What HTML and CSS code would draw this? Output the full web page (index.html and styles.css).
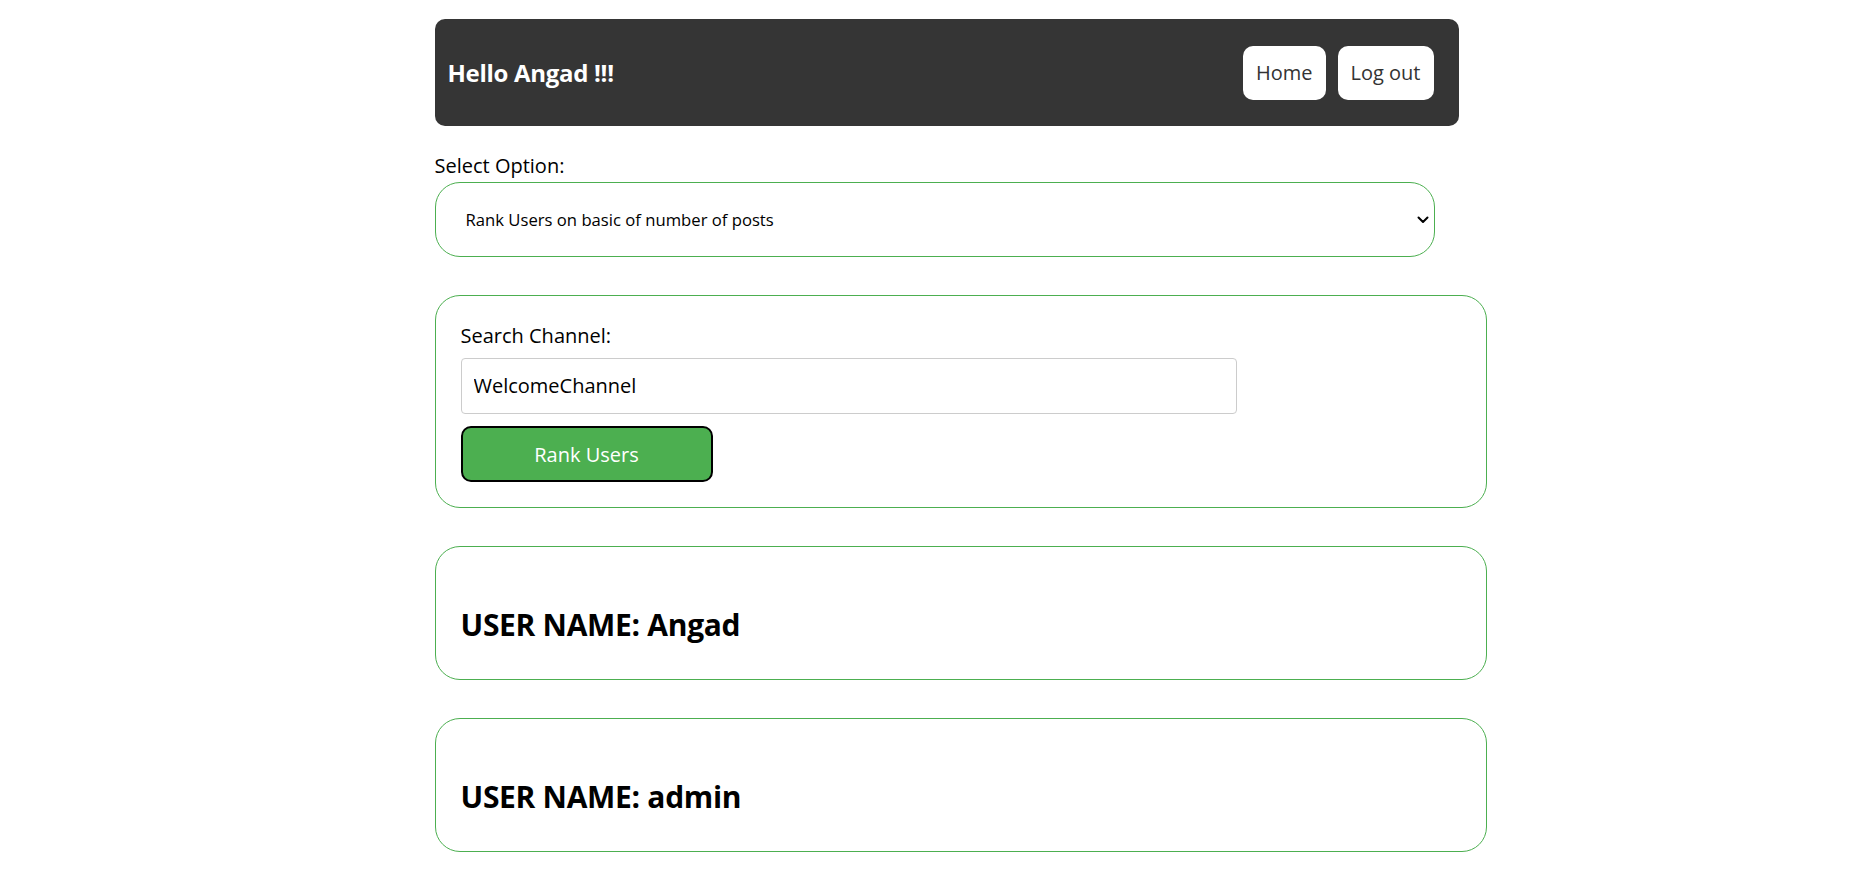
FILE: index.html
```html
<!DOCTYPE html>
<html lang="en">
<head>
<meta charset="utf-8">
<title>Rank Users</title>
<link rel="stylesheet" href="styles.css">
</head>
<body>
<div class="page">
  <header class="topbar">
    <h1 class="greeting">Hello Angad !!!</h1>
    <nav class="nav">
      <button class="nav-btn">Home</button>
      <button class="nav-btn">Log out</button>
    </nav>
  </header>

  <label class="field-label" for="opt">Select Option:</label>
  <div class="select-wrap">
    <select id="opt" class="option-select">
      <option>Rank Users on basic of number of posts</option>
    </select>
    <svg class="chevron" width="12" height="8" viewBox="0 0 12 8" aria-hidden="true">
      <path d="M1.5 1.5 L6 6 L10.5 1.5" fill="none" stroke="#000" stroke-width="2" stroke-linecap="round" stroke-linejoin="round"/>
    </svg>
  </div>

  <section class="search-box">
    <label class="search-label" for="chan">Search Channel:</label>
    <input id="chan" class="search-input" type="text" value="WelcomeChannel">
    <button class="rank-btn">Rank Users</button>
  </section>

  <div class="user-card"><h2 class="user-name">USER NAME: Angad</h2></div>
  <div class="user-card"><h2 class="user-name">USER NAME: admin</h2></div>
</div>
</body>
</html>
```
FILE: styles.css
```css
* { font-family: "Open Sans", "Liberation Sans", sans-serif; }
html, body { margin: 0; padding: 0; background: #fff; color: #000; }
.page { width: 1000px; margin: 0 auto; padding-top: 19px; padding-bottom: 20px; }

.topbar {
  width: 1024px;
  height: 107px;
  box-sizing: border-box;
  background: #353535;
  border-radius: 10px;
  display: flex;
  align-items: center;
  justify-content: space-between;
  padding: 0 25px 0 13px;
}
.greeting {
  margin: 0;
  color: #fff;
  font-size: 24px;
  font-weight: 700;
  letter-spacing: -0.3px;
  line-height: 30px;
}
.nav { display: flex; gap: 12px; }
.nav-btn {
  background: #fff;
  color: #333;
  border: none;
  border-radius: 10px;
  font-size: 20px;
  line-height: 30px;
  height: 54px;
  padding: 0 13px;
  cursor: pointer;
}

.field-label {
  display: block;
  margin-top: 25px;
  margin-bottom: 1px;
  font-size: 20px;
  line-height: 30px;
}
.select-wrap { position: relative; width: 1000px; }
.option-select {
  display: block;
  width: 1000px;
  height: 75px;
  box-sizing: border-box;
  border: 1px solid #4caf50;
  border-radius: 25px;
  background: #fff;
  padding: 0 30px;
  font-size: 16.67px;
  color: #000;
  appearance: none;
  -webkit-appearance: none;
  outline: none;
}
.chevron { position: absolute; right: 6px; top: 34px; }

.search-box {
  width: 100%;
  margin-top: 38px;
  border: 1px solid #4caf50;
  border-radius: 25px;
  padding: 25px 25px 25px;
}
.search-label {
  display: block;
  font-size: 20px;
  line-height: 30px;
  margin-bottom: 7px;
}
.search-input {
  display: block;
  width: 75%;
  padding: 12px;
  border: 1px solid #ccc;
  border-radius: 4px;
  font-size: 20px;
  line-height: 30px;
  height: 30px;
  color: #000;
  outline: none;
}
.rank-btn {
  display: block;
  margin-top: 12px;
  width: 252px;
  height: 56px;
  box-sizing: border-box;
  border: 2px solid #000;
  border-radius: 10px;
  background: #4caf50;
  color: #fff;
  font-size: 20px;
  cursor: pointer;
}

.user-card {
  width: 100%;
  margin-top: 38px;
  border: 1px solid #4caf50;
  border-radius: 25px;
  padding: 55px 25px 32px;
}
.user-name {
  margin: 0;
  font-size: 30px;
  font-weight: 700;
  line-height: 45px;
  letter-spacing: -0.3px;
}
```
